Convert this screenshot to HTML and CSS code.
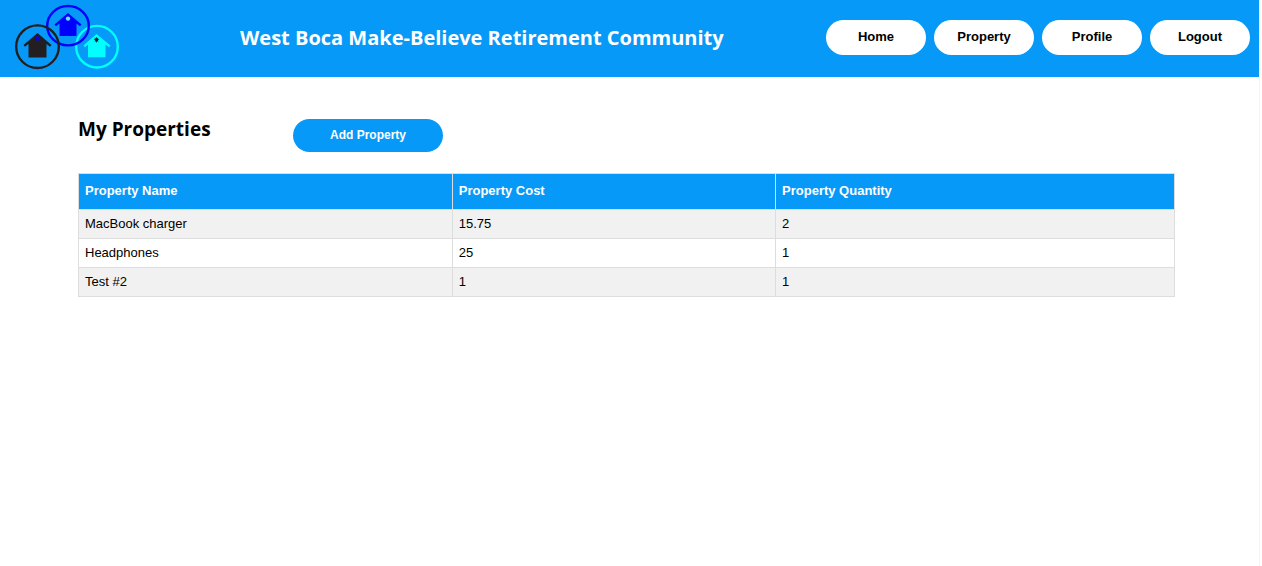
FILE: index.html
```
<!DOCTYPE html>
<html lang="en">
<head>
<meta charset="utf-8">
<meta name="viewport" content="width=device-width, initial-scale=1">
<title>My Properties</title>
<link rel="stylesheet" href="styles.css">
</head>
<body>
<div class="page">
  <header class="site-header">
    <svg class="logo" viewBox="0 0 108 66" role="img" aria-label="Community logo">
      <g fill="none" stroke-width="2.400">
        <circle cx="84" cy="42.700" r="20.800" stroke="#00ffff"/>
        <ellipse cx="55" cy="21.700" rx="20.800" ry="19.700" stroke="#0000ff"/>
        <circle cx="24.500" cy="42.700" r="21.300" stroke="#231f20"/>
      </g>
      <path fill="#231f20" d="M24.500 29 38.500 41 37 42.700 33.500 40V53.500H15.500V40L12 42.700 10.500 41Z"/>
      <path fill="#0000ff" d="M55 9 68.500 20.500 67 22.200 63.500 19.500V32H46.500V19.500L43 22.200 41.500 20.500Z"/>
      <path fill="#00ffff" d="M83.500 30 97.500 41.500 96 43.200 92.500 40.500V53.200H75V40.500L72 43.200 70.500 41.500Z"/>
      <circle cx="24.500" cy="34.500" r="2.200" fill="#0000ff"/>
      <circle cx="55" cy="14.600" r="2.200" fill="#66e6ff"/>
      <circle cx="83.500" cy="35.800" r="1.800" fill="#102030"/>
      <path stroke="#102030" stroke-width=".7" d="M83.500 33v5.500M80.900 35.400h5.200M81.800 37.800l3.400-4M81.800 33.800l3.400 4"/>
    </svg>
    <h1 class="site-title">West Boca Make-Believe Retirement Community</h1>
    <nav class="site-nav">
      <a class="nav-link" href="#home">Home</a>
      <a class="nav-link" href="#property">Property</a>
      <a class="nav-link" href="#profile">Profile</a>
      <a class="nav-link" href="#logout">Logout</a>
    </nav>
  </header>
  <main class="content">
    <div class="toolbar">
      <h2 class="heading">My Properties</h2>
      <button class="add-button" type="button">Add Property</button>
    </div>
    <table class="properties">
      <thead>
        <tr><th class="col-name" scope="col">Property Name</th><th class="col-cost" scope="col">Property Cost</th><th scope="col">Property Quantity</th></tr>
      </thead>
      <tbody>
        <tr><td>MacBook charger</td><td>15.75</td><td>2</td></tr>
        <tr><td>Headphones</td><td>25</td><td>1</td></tr>
        <tr><td>Test #2</td><td>1</td><td>1</td></tr>
      </tbody>
    </table>
  </main>
</div>
</body>
</html>
```
FILE: styles.css
```
* { box-sizing: border-box; }

body {
  margin: 0;
  background: #fff;
  color: #000;
  font-family: "Liberation Sans", Arial, sans-serif;
}

.page {
  min-height: 100vh;
  margin-right: 3px;
  box-shadow: 1px 0 #f4f4f4;
}

.site-header {
  display: flex;
  align-items: flex-start;
  padding: 4px 9px 7px 13px;
  background: #0699f8;
}

.logo {
  flex: none;
  width: 108px;
  height: 66px;
}

.site-title {
  flex: 1;
  margin: 18px 0 0 119px;
  color: #fff;
  font: 700 20px/32px "Open Sans", "Noto Sans", sans-serif;
  white-space: nowrap;
}

.site-nav {
  display: flex;
  gap: 8px;
  margin-top: 16px;
}

.nav-link {
  width: 100px;
  height: 35px;
  border-radius: 18px;
  background: #fff;
  color: #000;
  font-size: 13px;
  font-weight: 700;
  line-height: 34px;
  text-align: center;
  text-decoration: none;
}

.content {
  padding: 42px 84px 0 78px;
}

.toolbar {
  display: flex;
  align-items: flex-start;
  margin-bottom: 21px;
}

.heading {
  width: 215px;
  margin: 0;
  font: 700 19px/20px "Open Sans", "Noto Sans", sans-serif;
}

.add-button {
  width: 150px;
  height: 33px;
  padding: 0;
  border: 0;
  border-radius: 17px;
  background: #0699f8;
  color: #fff;
  font: 700 12px/33px "Liberation Sans", Arial, sans-serif;
}

.properties {
  width: 100%;
  border-collapse: collapse;
  table-layout: fixed;
  font-size: 13px;
  line-height: 16px;
}

.col-name { width: 34.1%; }
.col-cost { width: 29.5%; }

.properties th,
.properties td {
  padding: 6px;
  border: 1px solid #ddd;
  text-align: left;
}

.properties th {
  padding: 9px 6px 10px;
  background: #0699f8;
  color: #fff;
}

.properties tbody tr:nth-child(odd) { background: #f1f1f1; }
```
